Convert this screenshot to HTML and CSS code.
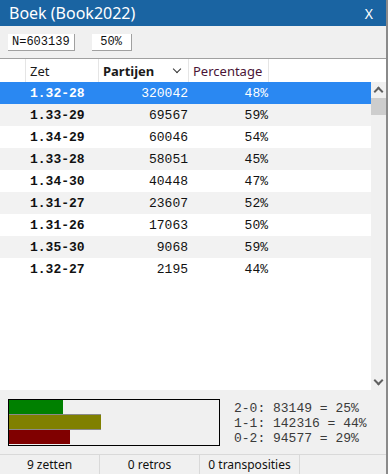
FILE: index.html
```html
<!DOCTYPE html>
<html lang="nl">
<head>
    <meta charset="UTF-8">
    <title>Boek (Book2022)</title>
    <link rel="stylesheet" href="styles.css">
</head>
<body>
    <div class="window">
        <div class="titlebar">
            <span class="title">Boek (Book2022)</span>
            <span class="close">X</span>
        </div>

        <div class="toolbar">
            <span class="tool-btn">N=603139</span>
            <span class="tool-btn wide">50%</span>
        </div>

        <div class="list">
            <div class="list-header">
                <div class="col col-pad"></div>
                <div class="col col-zet">Zet</div>
                <div class="col col-count sorted">Partijen <span class="chevron"></span></div>
                <div class="col col-pct">Percentage</div>
                <div class="col col-rest"></div>
            </div>
            <div class="list-body">
                <div class="rows" id="rows"></div>
                <div class="scrollbar">
                    <span class="arrow up"></span>
                    <span class="thumb"></span>
                    <span class="track"></span>
                    <span class="arrow down"></span>
                </div>
            </div>
        </div>

        <div class="summary">
            <div class="bars">
                <div class="bar win" style="width: 54px"></div>
                <div class="bar draw" style="width: 92px"></div>
                <div class="bar loss" style="width: 61px"></div>
            </div>
            <div class="results">
                <div>2-0: 83149 = 25%</div>
                <div>1-1: 142316 = 44%</div>
                <div>0-2: 94577 = 29%</div>
            </div>
        </div>

        <div class="statusbar">
            <span class="cell">9 zetten</span>
            <span class="cell">0 retros</span>
            <span class="cell">0 transposities</span>
            <span class="cell filler"></span>
        </div>
    </div>

    <script>
        const MOVES = [
            ['1.32-28', 320042, 48],
            ['1.33-29', 69567, 59],
            ['1.34-29', 60046, 54],
            ['1.33-28', 58051, 45],
            ['1.34-30', 40448, 47],
            ['1.31-27', 23607, 52],
            ['1.31-26', 17063, 50],
            ['1.35-30', 9068, 59],
            ['1.32-27', 2195, 44]
        ];

        const rows = document.getElementById('rows');

        MOVES.forEach(([move, games, pct], i) => {
            const row = document.createElement('div');
            row.className = 'row' + (i === 0 ? ' selected' : '') + (i % 2 ? ' alt' : '');
            row.innerHTML = `
                <span class="col col-pad"></span>
                <span class="col col-zet">${move}</span>
                <span class="col col-count">${games}</span>
                <span class="col col-pct">${pct}%</span>`;
            rows.appendChild(row);
        });
    </script>
</body>
</html>
```

FILE: styles.css
```css
* {
    margin: 0;
    padding: 0;
    box-sizing: border-box;
}

body {
    width: 388px;
    height: 474px;
    overflow: hidden;
    background: #f0f0f0;
    font-family: 'Noto Sans', 'Open Sans', sans-serif;
}

.window {
    display: flex;
    flex-direction: column;
    height: 474px;
    border-right: 2px solid #8a8a8a;
    background: #f0f0f0;
}

.titlebar {
    height: 26px;
    display: flex;
    align-items: center;
    justify-content: space-between;
    padding: 0 13px 0 9px;
    background: #1a64a2;
    color: #fff;
}

.title {
    font-size: 16px;
}

.close {
    font-size: 14px;
}

.toolbar {
    height: 33px;
    display: flex;
    align-items: center;
    gap: 17px;
    padding: 0 8px;
    border-bottom: 1px solid #a0a0a0;
}

.tool-btn {
    height: 17px;
    padding: 0 4px;
    display: flex;
    align-items: center;
    justify-content: center;
    background: #fff;
    border-right: 1px solid #a0a0a0;
    border-bottom: 1px solid #a0a0a0;
    font-family: 'Liberation Mono', monospace;
    font-size: 12px;
    color: #111;
}

.tool-btn.wide {
    width: 40px;
}

.list {
    height: 331px;
    display: flex;
    flex-direction: column;
    background: #fff;
}

.list-header {
    height: 23px;
    display: flex;
    font-size: 13px;
    color: #1a1a1a;
}

.list-header .col {
    display: flex;
    align-items: center;
    padding-left: 4px;
    border-right: 1px solid #e5e5e5;
}

.list-header .col-count,
.list-header .col-pct {
    justify-content: flex-start;
}

.list-header .col-rest {
    flex: 1;
    border-right: none;
}

.list-header .sorted {
    font-weight: 700;
    position: relative;
}

.list-header .col-pct {
    color: #4a1436;
}

.chevron {
    position: absolute;
    right: 8px;
    top: 7px;
    width: 6px;
    height: 6px;
    border-right: 1.5px solid #333;
    border-bottom: 1.5px solid #333;
    transform: rotate(45deg);
}

.col-pad {
    width: 26px;
}

.col-zet {
    width: 73px;
}

.col-count {
    width: 90px;
}

.col-pct {
    width: 80px;
}

.list-body {
    flex: 1;
    display: flex;
}

.rows {
    flex: 1;
}

.row {
    height: 22px;
    display: flex;
    align-items: center;
    font-family: 'Liberation Mono', monospace;
    font-size: 13px;
    color: #111;
}

.row.alt {
    background: #f2f2f2;
}

.row.selected {
    background: #2a88f2;
    color: #fff;
}

.row .col-zet {
    padding-left: 4px;
    font-weight: 700;
}

.row .col-count,
.row .col-pct {
    text-align: right;
}

.row .col-count {
    padding-right: 1px;
}

.row .col-pct {
    padding-right: 1px;
}

.scrollbar {
    width: 15px;
    display: flex;
    flex-direction: column;
    align-items: center;
    background: #f0f0f0;
}

.arrow {
    height: 16px;
    width: 15px;
    position: relative;
}

.arrow::after {
    content: '';
    position: absolute;
    left: 4px;
    width: 5px;
    height: 5px;
    border-left: 2px solid #606060;
    border-top: 2px solid #606060;
}

.arrow.up::after {
    top: 6px;
    transform: rotate(45deg);
}

.arrow.down::after {
    top: 3px;
    transform: rotate(225deg);
}

.thumb {
    width: 15px;
    height: 17px;
    background: #cdcdcd;
}

.track {
    flex: 1;
}

.summary {
    flex: 1;
    display: flex;
    align-items: center;
    gap: 14px;
    padding: 0 8px;
}

.bars {
    width: 212px;
    height: 47px;
    border: 1px solid #000;
    display: flex;
    flex-direction: column;
}

.bar {
    flex: 1;
}

.bar.win {
    background: #008000;
}

.bar.draw {
    background: #808000;
    border-top: 1px solid #8a8a8a;
    border-bottom: 1px solid #8a8a8a;
}

.bar.loss {
    background: #800000;
}

.results {
    font-family: 'Liberation Mono', monospace;
    font-size: 13px;
    line-height: 15px;
    color: #3a3a3a;
    padding-top: 2px;
}

.statusbar {
    height: 20px;
    display: flex;
    border-top: 1px solid #d9d9d9;
    font-size: 12px;
    color: #111;
}

.statusbar .cell {
    width: 100px;
    display: flex;
    align-items: center;
    justify-content: center;
    border-right: 1px solid #d9d9d9;
}

.statusbar .filler {
    flex: 1;
    border-right: none;
}
```
